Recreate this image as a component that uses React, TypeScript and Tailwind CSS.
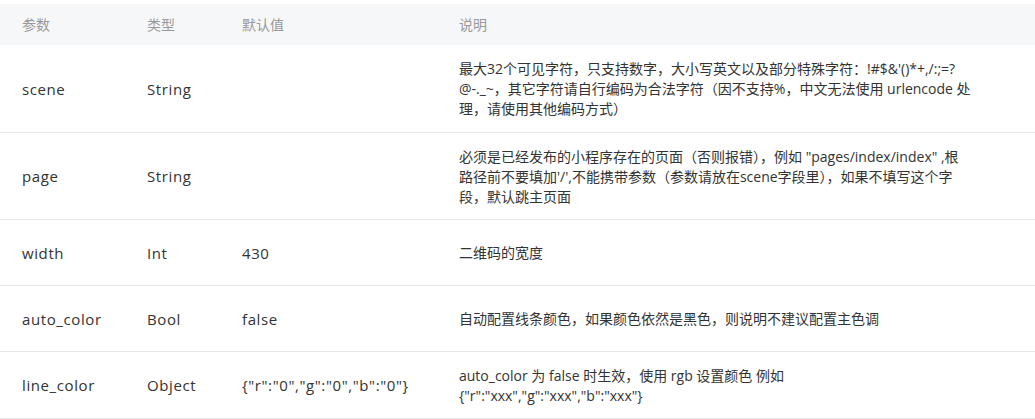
import React from "react";

type Row = {
  name: string;
  type: string;
  def: string;
  desc: string[];
  h: string;
};

const rows: Row[] = [
  {
    name: "scene",
    type: "String",
    def: "",
    desc: [
      "最大32个可见字符，只支持数字，大小写英文以及部分特殊字符：!#$&'()*+,/:;=?",
      "@-._~，其它字符请自行编码为合法字符（因不支持%，中文无法使用 urlencode 处",
      "理，请使用其他编码方式）",
    ],
    h: "h-[88px]",
  },
  {
    name: "page",
    type: "String",
    def: "",
    desc: [
      "必须是已经发布的小程序存在的页面（否则报错），例如 \"pages/index/index\" ,根",
      "路径前不要填加'/',不能携带参数（参数请放在scene字段里），如果不填写这个字",
      "段，默认跳主页面",
    ],
    h: "h-[87px]",
  },
  {
    name: "width",
    type: "Int",
    def: "430",
    desc: ["二维码的宽度"],
    h: "h-[66px]",
  },
  {
    name: "auto_color",
    type: "Bool",
    def: "false",
    desc: ["自动配置线条颜色，如果颜色依然是黑色，则说明不建议配置主色调"],
    h: "h-[66px]",
  },
  {
    name: "line_color",
    type: "Object",
    def: "{\"r\":\"0\",\"g\":\"0\",\"b\":\"0\"}",
    desc: [
      "auto_color 为 false 时生效，使用 rgb 设置颜色 例如",
      "{\"r\":\"xxx\",\"g\":\"xxx\",\"b\":\"xxx\"}",
    ],
    h: "h-[67px]",
  },
];

const grid = "grid grid-cols-[125px_95px_217px_1fr] items-center pl-[22px]";
const cell = "text-[15px] tracking-[0.6px] whitespace-nowrap";

export default function App() {
  return (
    <div
      className="w-[1035px] bg-white pt-[4px] text-[14px] leading-[20px] text-[#333]"
      style={{ fontFamily: '"Open Sans", "Noto Sans CJK SC", sans-serif' }}
    >
      <div className={`${grid} h-[41px] bg-[#f6f7f9] text-[#999]`}>
        <div>参数</div>
        <div>类型</div>
        <div>默认值</div>
        <div>说明</div>
      </div>
      {rows.map((r) => (
        <div key={r.name} className={`${grid} ${r.h} border-b border-[#e7e7e7]`}>
          <div className={cell}>{r.name}</div>
          <div className={cell}>{r.type}</div>
          <div className={cell}>{r.def}</div>
          <div className="pt-[1px]">
            {r.desc.map((l, i) => (
              <div key={i} className="whitespace-nowrap">
                {l}
              </div>
            ))}
          </div>
        </div>
      ))}
    </div>
  );
}
